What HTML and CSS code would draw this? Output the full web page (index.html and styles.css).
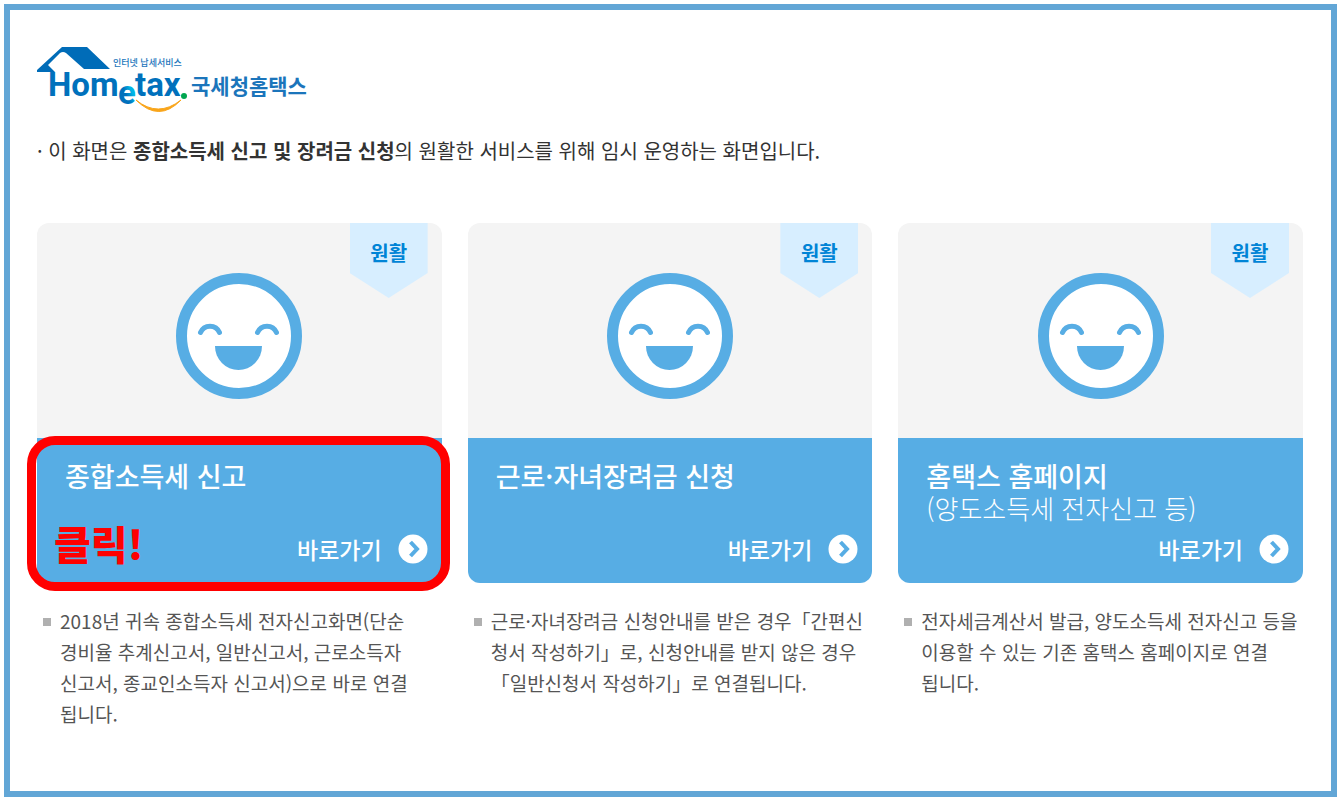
FILE: index.html
```html
<!DOCTYPE html>
<html lang="ko">
<head>
    <meta charset="UTF-8">
    <meta name="viewport" content="width=device-width, initial-scale=1.0">
    <title>국세청 홈택스</title>
    <link rel="stylesheet" href="styles.css">
</head>
<body>
    <!-- 아이콘 정의 -->
    <svg class="defs" width="0" height="0" aria-hidden="true">
        <symbol id="face" viewBox="0 0 126 126">
            <circle cx="63" cy="63" r="57.5" fill="#fff" stroke="#57ade4" stroke-width="11"/>
            <path d="M24.500 59.500C28 51 40 51 43.500 59.500M81.500 59.500C85 51 97 51 100.500 59.500" fill="none" stroke="#57ade4" stroke-width="5" stroke-linecap="round"/>
            <path d="M39 73H86A23.500 24 0 0 1 39 73Z" fill="#57ade4"/>
        </symbol>
        <symbol id="arrow" viewBox="0 0 30 30">
            <circle cx="15" cy="15" r="14.5" fill="#fff"/>
            <path d="M12.500 8L19 15L12.500 22" fill="none" stroke="#57ade4" stroke-width="4"/>
        </symbol>
    </svg>

    <div class="page">
        <h1 class="logo">
            <svg width="272" height="68" viewBox="0 0 272 68" role="img" aria-label="Hometax 국세청홈택스">
                <defs>
                    <linearGradient id="eColor" x1="0" y1="1" x2="1" y2="0">
                        <stop offset="45%" stop-color="#0071bc"/>
                        <stop offset="65%" stop-color="#00b4e6"/>
                    </linearGradient>
                </defs>
                <path d="M0 24L25 1H50L73 23H47L29 7Q26 5 23 7L11 19L18 26H0Z" fill="#006cb8"/>
                <text class="logo-sub" x="76" y="20">인터넷 납세서비스</text>
                <text class="logo-en" x="11" y="50">Hom</text>
                <text class="logo-en logo-e" x="81" y="58">e</text>
                <text class="logo-en" x="98" y="50">tax</text>
                <circle cx="147" cy="50" r="3" fill="#00a650"/>
                <path d="M99 54Q121 72 144 54Q122 77 99 54Z" fill="#f9a51a" stroke="#f9a51a"/>
                <text class="logo-kr" x="154" y="48">국세청홈택스</text>
            </svg>
        </h1>

        <p class="notice">· 이 화면은 <strong>종합소득세 신고 및 장려금 신청</strong>의 원활한 서비스를 위해 임시 운영하는 화면입니다.</p>

        <div class="services">
            <section class="service">
                <div class="card">
                    <div class="status">
                        <svg class="face"><use href="#face"/></svg>
                        <span class="ribbon">원활</span>
                    </div>
                    <div class="card-body">
                        <h2>종합소득세 신고</h2>
                        <a href="#" class="go">바로가기 <svg class="arrow"><use href="#arrow"/></svg></a>
                    </div>
                    <div class="highlight"><strong>클릭!</strong></div>
                </div>
                <ul class="desc">
                    <li>2018년 귀속 종합소득세 전자신고화면(단순<br>경비율 추계신고서, 일반신고서, 근로소득자<br>신고서, 종교인소득자 신고서)으로 바로 연결<br>됩니다.</li>
                </ul>
            </section>

            <section class="service">
                <div class="card">
                    <div class="status">
                        <svg class="face"><use href="#face"/></svg>
                        <span class="ribbon">원활</span>
                    </div>
                    <div class="card-body">
                        <h2>근로·자녀장려금 신청</h2>
                        <a href="#" class="go">바로가기 <svg class="arrow"><use href="#arrow"/></svg></a>
                    </div>
                </div>
                <ul class="desc">
                    <li>근로·자녀장려금 신청안내를 받은 경우「간편신<br>청서 작성하기」로, 신청안내를 받지 않은 경우<br>「일반신청서 작성하기」로 연결됩니다.</li>
                </ul>
            </section>

            <section class="service">
                <div class="card">
                    <div class="status">
                        <svg class="face"><use href="#face"/></svg>
                        <span class="ribbon">원활</span>
                    </div>
                    <div class="card-body">
                        <h2>홈택스 홈페이지<br><small>(양도소득세 전자신고 등)</small></h2>
                        <a href="#" class="go">바로가기 <svg class="arrow"><use href="#arrow"/></svg></a>
                    </div>
                </div>
                <ul class="desc">
                    <li>전자세금계산서 발급, 양도소득세 전자신고 등을<br>이용할 수 있는 기존 홈택스 홈페이지로 연결<br>됩니다.</li>
                </ul>
            </section>
        </div>
    </div>
</body>
</html>
```
FILE: styles.css
```css
* {
    box-sizing: border-box;
}
body {
    margin: 0;
    padding: 4px 6px 6px 4px;
    min-height: 100vh;
    display: flex;
    background: #fff;
    color: #333;
    font-family: "Noto Sans CJK KR", sans-serif;
}
.defs {
    position: absolute;
}
.page {
    flex: 1;
    border: 6px solid #62a6d6;
    padding: 36px 28px 40px 27px;
}

/* 로고 */
.logo {
    margin: 0;
    height: 68px;
}
.logo svg {
    display: block;
}
.logo-en {
    font: 700 33px Roboto, sans-serif;
    fill: #0071bc;
}
.logo-e {
    fill: url(#eColor);
}
.logo-kr {
    font-size: 21px;
    font-weight: 700;
    fill: #1b75bb;
}
.logo-sub {
    font-size: 9px;
    font-weight: 500;
    fill: #1b75bb;
}

.notice {
    margin: 22px 0 57px;
    font-size: 20px;
    line-height: 30px;
}

/* 서비스 목록 */
.services {
    display: grid;
    grid-template-columns: repeat(3, 1fr);
    gap: 26px;
}
.card {
    position: relative;
}
.status {
    position: relative;
    height: 215px;
    padding-top: 50px;
    background: #f4f4f4;
    border-radius: 12px 12px 0 0;
    text-align: center;
}
.face {
    width: 126px;
    height: 126px;
}
.ribbon {
    position: absolute;
    top: 0;
    right: 14px;
    width: 78px;
    height: 75px;
    background: #d7eeff;
    clip-path: polygon(0 0, 100% 0, 100% 50px, 50% 100%, 0 50px);
    color: #0084d6;
    font-size: 20px;
    font-weight: 700;
    line-height: 60px;
}
.card-body {
    display: flex;
    flex-direction: column;
    justify-content: space-between;
    height: 145px;
    padding: 22px 14px 18px 28px;
    background: #57ade4;
    border-radius: 0 0 12px 12px;
    color: #fff;
}
.card-body h2 {
    margin: 0;
    font-size: 27px;
    font-weight: 500;
    line-height: 32px;
}
.card-body small {
    font-size: 26px;
    font-weight: 300;
}
.go {
    display: flex;
    align-items: center;
    align-self: flex-end;
    gap: 16px;
    height: 32px;
    color: #fff;
    font-size: 23px;
    font-weight: 500;
    line-height: 28px;
    text-decoration: none;
}
.arrow {
    width: 30px;
    height: 30px;
}

/* 클릭 강조 표시 */
.highlight {
    position: absolute;
    left: -10px;
    right: -8px;
    bottom: -8px;
    height: 155px;
    padding: 74px 0 0 18px;
    border: 9px solid #f00;
    border-radius: 28px;
    color: #f00;
    font-size: 40px;
    line-height: 48px;
    pointer-events: none;
}
.highlight strong {
    font-weight: 900;
}

.desc {
    margin: 22px 0 0;
    padding: 0;
    list-style: none;
    color: #555;
    font-size: 19px;
    line-height: 31px;
    white-space: nowrap;
}
.desc li {
    position: relative;
    padding-left: 23px;
}
.desc li::before {
    content: "";
    position: absolute;
    left: 6px;
    top: 13px;
    width: 8px;
    height: 8px;
    background: #b0b0b0;
}

@media (max-width: 1100px) {
    .services {
        grid-template-columns: 1fr;
    }
    .desc {
        white-space: normal;
    }
}
```
